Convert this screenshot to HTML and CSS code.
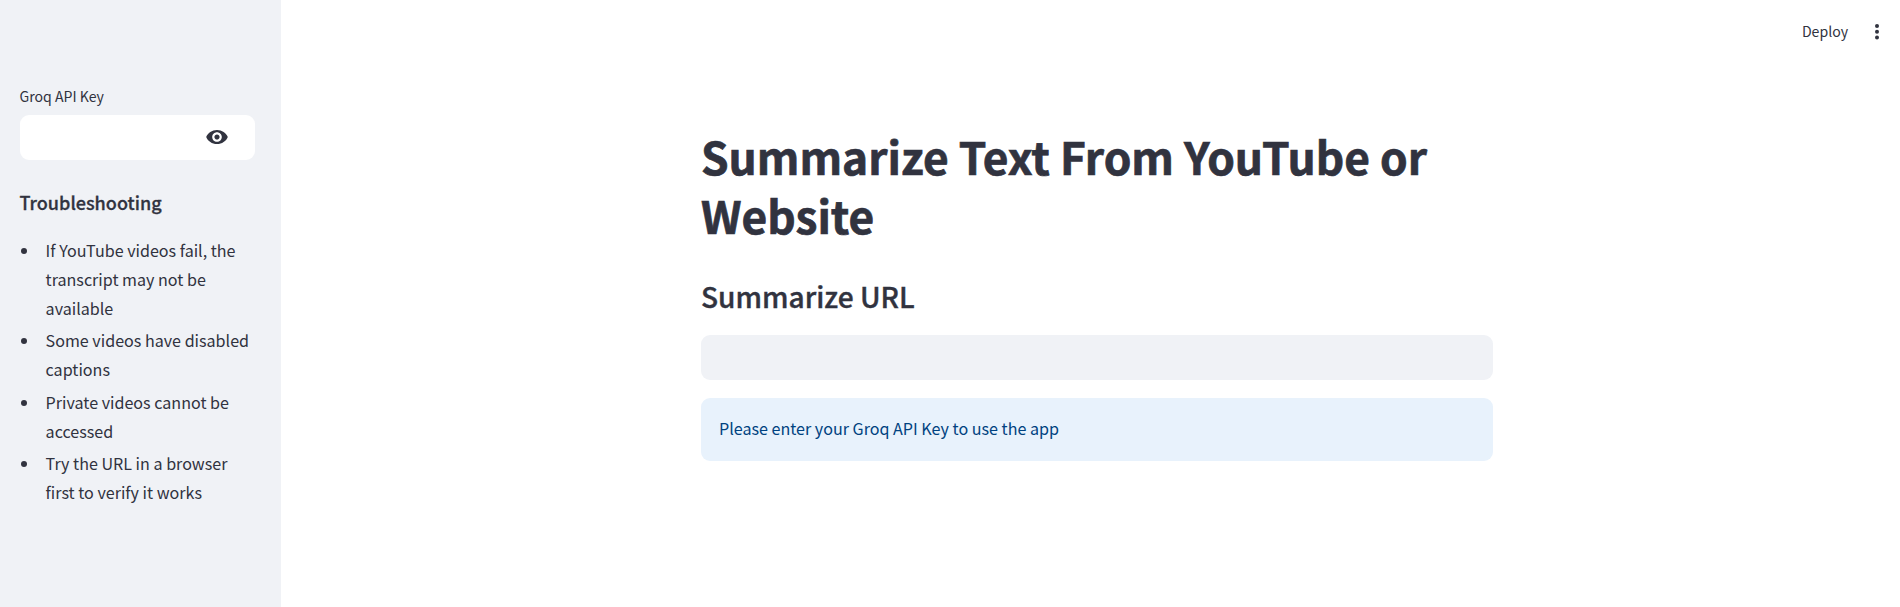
FILE: index.html
```html
<!DOCTYPE html>
<html lang="en">
<head>
<meta charset="utf-8">
<title>Summarize Text From YouTube or Website</title>
<link rel="stylesheet" href="styles.css">
</head>
<body>
<div class="app">
  <aside class="sidebar">
    <label class="field-label" for="key">Groq API Key</label>
    <div class="key-field">
      <input class="key-input" id="key" type="password">
      <button class="eye" type="button" aria-label="Show password">
        <svg viewBox="0 0 24 24" width="24" height="24"><path d="M12 4.9C7 4.9 2.9 7.8 1.2 12c1.7 4.2 5.8 7.1 10.8 7.1s9.1-2.9 10.8-7.1C21.1 7.8 17 4.9 12 4.9zM12 16.8c-2.65 0-4.8-2.15-4.8-4.8s2.15-4.8 4.8-4.8 4.8 2.15 4.8 4.8-2.15 4.8-4.8 4.8zm0-7.4c-1.44 0-2.6 1.16-2.6 2.6s1.16 2.6 2.6 2.6 2.6-1.16 2.6-2.6-1.16-2.6-2.6-2.6z"/></svg>
      </button>
    </div>
    <h3 class="side-title">Troubleshooting</h3>
    <ul class="tips">
      <li>If YouTube videos fail, the<br>transcript may not be<br>available</li>
      <li>Some videos have disabled<br>captions</li>
      <li>Private videos cannot be<br>accessed</li>
      <li>Try the URL in a browser<br>first to verify it works</li>
    </ul>
  </aside>
  <div class="page">
    <header class="toolbar">
      <span class="deploy">Deploy</span>
      <svg class="kebab" viewBox="0 0 6 18" width="6" height="18"><circle cx="3" cy="3" r="2"/><circle cx="3" cy="8.7" r="2"/><circle cx="3" cy="14.4" r="2"/></svg>
    </header>
    <main class="content">
      <h1 class="title">Summarize Text From YouTube or<br>Website</h1>
      <h2 class="subtitle">Summarize URL</h2>
      <input class="url-input" type="text" aria-label="URL">
      <div class="alert">Please enter your Groq API Key to use the app</div>
    </main>
  </div>
</div>
</body>
</html>
```
FILE: styles.css
```css
* { box-sizing: border-box; }
body {
  margin: 0;
  background: #fff;
  color: #31333f;
  font-family: "Noto Sans CJK SC", "Noto Sans", sans-serif;
  font-size: 16.1px;
  line-height: 28.8px;
}
h1, h2, h3, ul { margin: 0; padding: 0; }
input, button { border: 0; padding: 0; background: none; font: inherit; outline: none; }
.app { display: flex; height: 607px; overflow: hidden; }
.sidebar {
  width: 281px;
  flex: none;
  background: #f0f2f6;
  padding: 84px 26px 0 20px;
}
.field-label { display: block; margin-left: -0.5px; font-size: 14.1px; line-height: 25px; height: 31px; }
.key-field {
  display: flex;
  align-items: center;
  height: 45px;
  border-radius: 9px;
  background: #fff;
}
.key-input { flex: 1; min-width: 0; height: 45px; }
.eye { display: flex; margin: 0 26px 1px 0; }
.eye svg { fill: #31333f; }
.side-title {
  margin: 30px 0 0 -0.5px;
  font-size: 18.05px;
  line-height: 24px;
  font-weight: 500;
  -webkit-text-stroke: 0.3px #31333f;
}
.tips { margin-top: 22px; padding-left: 25.6px; list-style: none; }
.tips li { position: relative; margin-bottom: 3.9px; white-space: nowrap; }
.tips li::before {
  content: "";
  position: absolute;
  left: -24.6px;
  top: 12px;
  width: 6px;
  height: 6px;
  border-radius: 50%;
  background: #31333f;
}
.page { flex: 1; display: flex; flex-direction: column; }
.toolbar {
  display: flex;
  justify-content: flex-end;
  align-items: center;
  gap: 26px;
  height: 64px;
  padding: 0 20px 0 0;
}
.deploy { margin-bottom: 2px; font-size: 14.1px; }
.kebab { fill: #31333f; }
.content { width: 792px; margin: 63px 0 0 420px; }
.title {
  font-size: 44.25px;
  line-height: 59.4px;
  font-weight: 700;
  white-space: nowrap;
  -webkit-text-stroke: 0.7px #31333f;
}
.subtitle {
  margin-top: 31px;
  font-size: 28.1px;
  line-height: 37.8px;
  font-weight: 500;
  -webkit-text-stroke: 0.4px #31333f;
}
.url-input {
  display: block;
  width: 100%;
  height: 45px;
  margin-top: 20.4px;
  border-radius: 9px;
  background: #f0f2f6;
}
.alert {
  margin-top: 18px;
  height: 63px;
  padding: 16px 18px;
  border-radius: 9px;
  background: #e8f2fc;
  color: #004280;
}
```
